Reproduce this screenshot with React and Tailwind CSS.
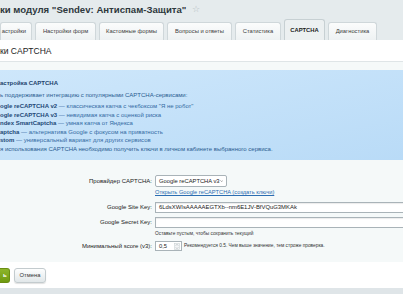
// App.jsx — module settings page, CAPTCHA tab
const tabs = [
  { label: 'астройки', cls: 'w-[32px] justify-end pr-[5px]' },
  { label: 'Настройки форм', cls: 'w-[61px] justify-center' },
  { label: 'Кастомные формы', cls: 'w-[65px] justify-center' },
  { label: 'Вопросы и ответы', cls: 'w-[65px] justify-center' },
  { label: 'Статистика', cls: 'w-[46px] justify-center' },
  { label: 'CAPTCHA', cls: 'w-[41px] justify-center', active: true },
  { label: 'Диагностика', cls: 'w-[49px] justify-center' },
];

const services = [
  ['ogle reCAPTCHA v2', ' — классическая капча с чекбоксом "Я не робот"'],
  ['ogle reCAPTCHA v3', ' — невидимая капча с оценкой риска'],
  ['ndex SmartCaptcha', ' — умная капча от Яндекса'],
  ['aptcha', ' — альтернатива Google с фокусом на приватность'],
  ['stom', ' — универсальный вариант для других сервисов'],
];

const Label = ({ children }) => (
  <div className="w-[152px] shrink-0 text-right text-[6px] text-[#1b1b1b] whitespace-nowrap">
    {children}
  </div>
);

export default function App() {
  return (
    <div className="w-[403px] h-[294px] overflow-hidden bg-[#e5ebed] font-['Liberation_Sans',Arial,sans-serif]">
      {/* page title */}
      <div className="h-[19px] flex items-center gap-[6px]">
        <h1 className="text-[9.6px] font-bold text-[#2e383c] leading-none whitespace-nowrap">
          ки модуля "Sendev: Антиспам-Защита"
        </h1>
        <span className="text-[9px] leading-none text-[#b4bdc1]">☆</span>
      </div>

      {/* tabs */}
      <div className="h-[21px] flex items-end gap-[3px]">
        {tabs.map((t) => (
          <div
            key={t.label}
            className={
              'shrink-0 flex items-center whitespace-nowrap border border-b-0 rounded-t-[3px] text-[5.8px] ' +
              t.cls +
              (t.active
                ? ' h-[21px] bg-[#ecf0f1] border-[#c7d0d3] font-bold text-[#1a1a1a]'
                : ' h-[18px] bg-gradient-to-b from-[#fbfcfc] to-[#eef2f3] border-[#cfd7da] text-[#3c3c3c]')
            }
          >
            {t.label}
          </div>
        ))}
      </div>

      <div className="bg-white">
        <div className="h-[22px] pt-[1px] flex items-center border-b border-[#dfe5e7] text-[8.5px] text-[#222] whitespace-nowrap">
          ки CAPTCHA
        </div>

        <div className="bg-[#f5f9f9] pt-[8px] pb-[11px]">
          {/* info box */}
          <div className="h-[90px] pt-[9px] bg-gradient-to-br from-[#cee7fb] to-[#b9dbf7] text-[6px] whitespace-nowrap">
            <div className="h-[8px] leading-[8px] font-bold text-[#1c426b]">астройка CAPTCHA</div>
            <div className="mt-[4px] h-[8px] leading-[8px] text-[#2a5c90]">
              ь поддерживает интеграцию с популярными CAPTCHA-сервисами:
            </div>
            <div className="mt-[3px]">
              {services.map(([name, desc]) => (
                <div key={name} className="h-[8.6px] leading-[8.6px] text-[#336aa3]">
                  <span className="font-bold text-[#1d4877]">{name}</span>
                  {desc}
                </div>
              ))}
            </div>
            <div className="h-[8px] leading-[8px] text-[#2a5c90]">
              я использования CAPTCHA необходимо получить ключи в личном кабинете выбранного сервиса.
            </div>
          </div>

          {/* form */}
          <div className="mt-[15px] flex items-center h-[12px]">
            <Label>Провайдер CAPTCHA:</Label>
            <div className="ml-[3px] w-[72px] h-[12px] flex items-center justify-between px-[3px] bg-white border border-[#a9b3b8] rounded-[2px] text-[5.8px] text-[#222] whitespace-nowrap">
              <span>Google reCAPTCHA v3</span>
              <svg width="5" height="4" viewBox="0 0 5 4" fill="none">
                <path d="M0.6 1 L2.5 3 L4.4 1" stroke="#555" strokeWidth="0.7" />
              </svg>
            </div>
          </div>
          <div className="mt-[1px] h-[8px] leading-[8px] pl-[155px] text-[5.7px] whitespace-nowrap">
            <a className="text-[#2b6db2] underline">Открыть Google reCAPTCHA (создать ключи)</a>
          </div>

          <div className="mt-[6px] flex items-center h-[11px]">
            <Label>Google Site Key:</Label>
            <div className="ml-[3px] w-[260px] h-[11px] shrink-0 flex items-center px-[3px] bg-white border border-[#a9b3b8] shadow-[inset_0_1px_1px_rgba(0,0,0,0.08)] text-[5.9px] text-[#222] whitespace-nowrap">
              6LdsXWIsAAAAAEGTXb--nm6E1JV-BfVQuG3MKAk
            </div>
          </div>

          <div className="mt-[4px] flex items-center h-[11px]">
            <Label>Google Secret Key:</Label>
            <div className="ml-[3px] w-[260px] h-[11px] shrink-0 bg-white border border-[#a9b3b8] shadow-[inset_0_1px_1px_rgba(0,0,0,0.08)]" />
          </div>
          <div className="mt-[2px] h-[7px] leading-[7px] pl-[155px] text-[4.8px] text-[#333] whitespace-nowrap">
            Оставьте пустым, чтобы сохранить текущий
          </div>

          <div className="mt-[4px] flex items-center h-[10px]">
            <Label>Минимальный score (v3):</Label>
            <div className="ml-[3px] w-[27px] h-[10px] shrink-0 flex items-center justify-between pl-[3px] pr-[1px] bg-white border border-[#a9b3b8] text-[5.8px] text-[#222]">
              <span>0,5</span>
              <svg width="6" height="7" viewBox="0 0 6 7" fill="none">
                <rect x="0.3" y="0.3" width="5.4" height="6.4" fill="#f3f5f6" stroke="#c4cbce" strokeWidth="0.5" />
                <path d="M1.8 2.6 L3 1.4 L4.2 2.6" stroke="#8a9396" strokeWidth="0.5" />
                <path d="M1.8 4.4 L3 5.6 L4.2 4.4" stroke="#8a9396" strokeWidth="0.5" />
              </svg>
            </div>
            <span className="ml-[2px] text-[4.8px] text-[#333] whitespace-nowrap">
              Рекомендуется 0.5. Чем выше значение, тем строже проверка.
            </span>
          </div>
        </div>

        {/* buttons */}
        <div className="h-[26px] pt-[6px] flex gap-[4px]">
          <button className="w-[10px] h-[15px] pl-[3px] text-left bg-gradient-to-b from-[#8db52a] to-[#6f9a10] border border-l-0 border-[#6a8e12] rounded-r-[3px] text-[6px] font-bold text-white">
            ь
          </button>
          <button className="w-[32px] h-[15px] bg-gradient-to-b from-[#fdfefe] to-[#e1e7e9] border border-[#c3cbce] rounded-[3px] shadow-[0_1px_1px_rgba(0,0,0,0.12)] text-[5.8px] text-[#333]">
            Отмена
          </button>
        </div>
      </div>
      <div className="h-[6px] bg-[#dfe5e8]" />
    </div>
  );
}
